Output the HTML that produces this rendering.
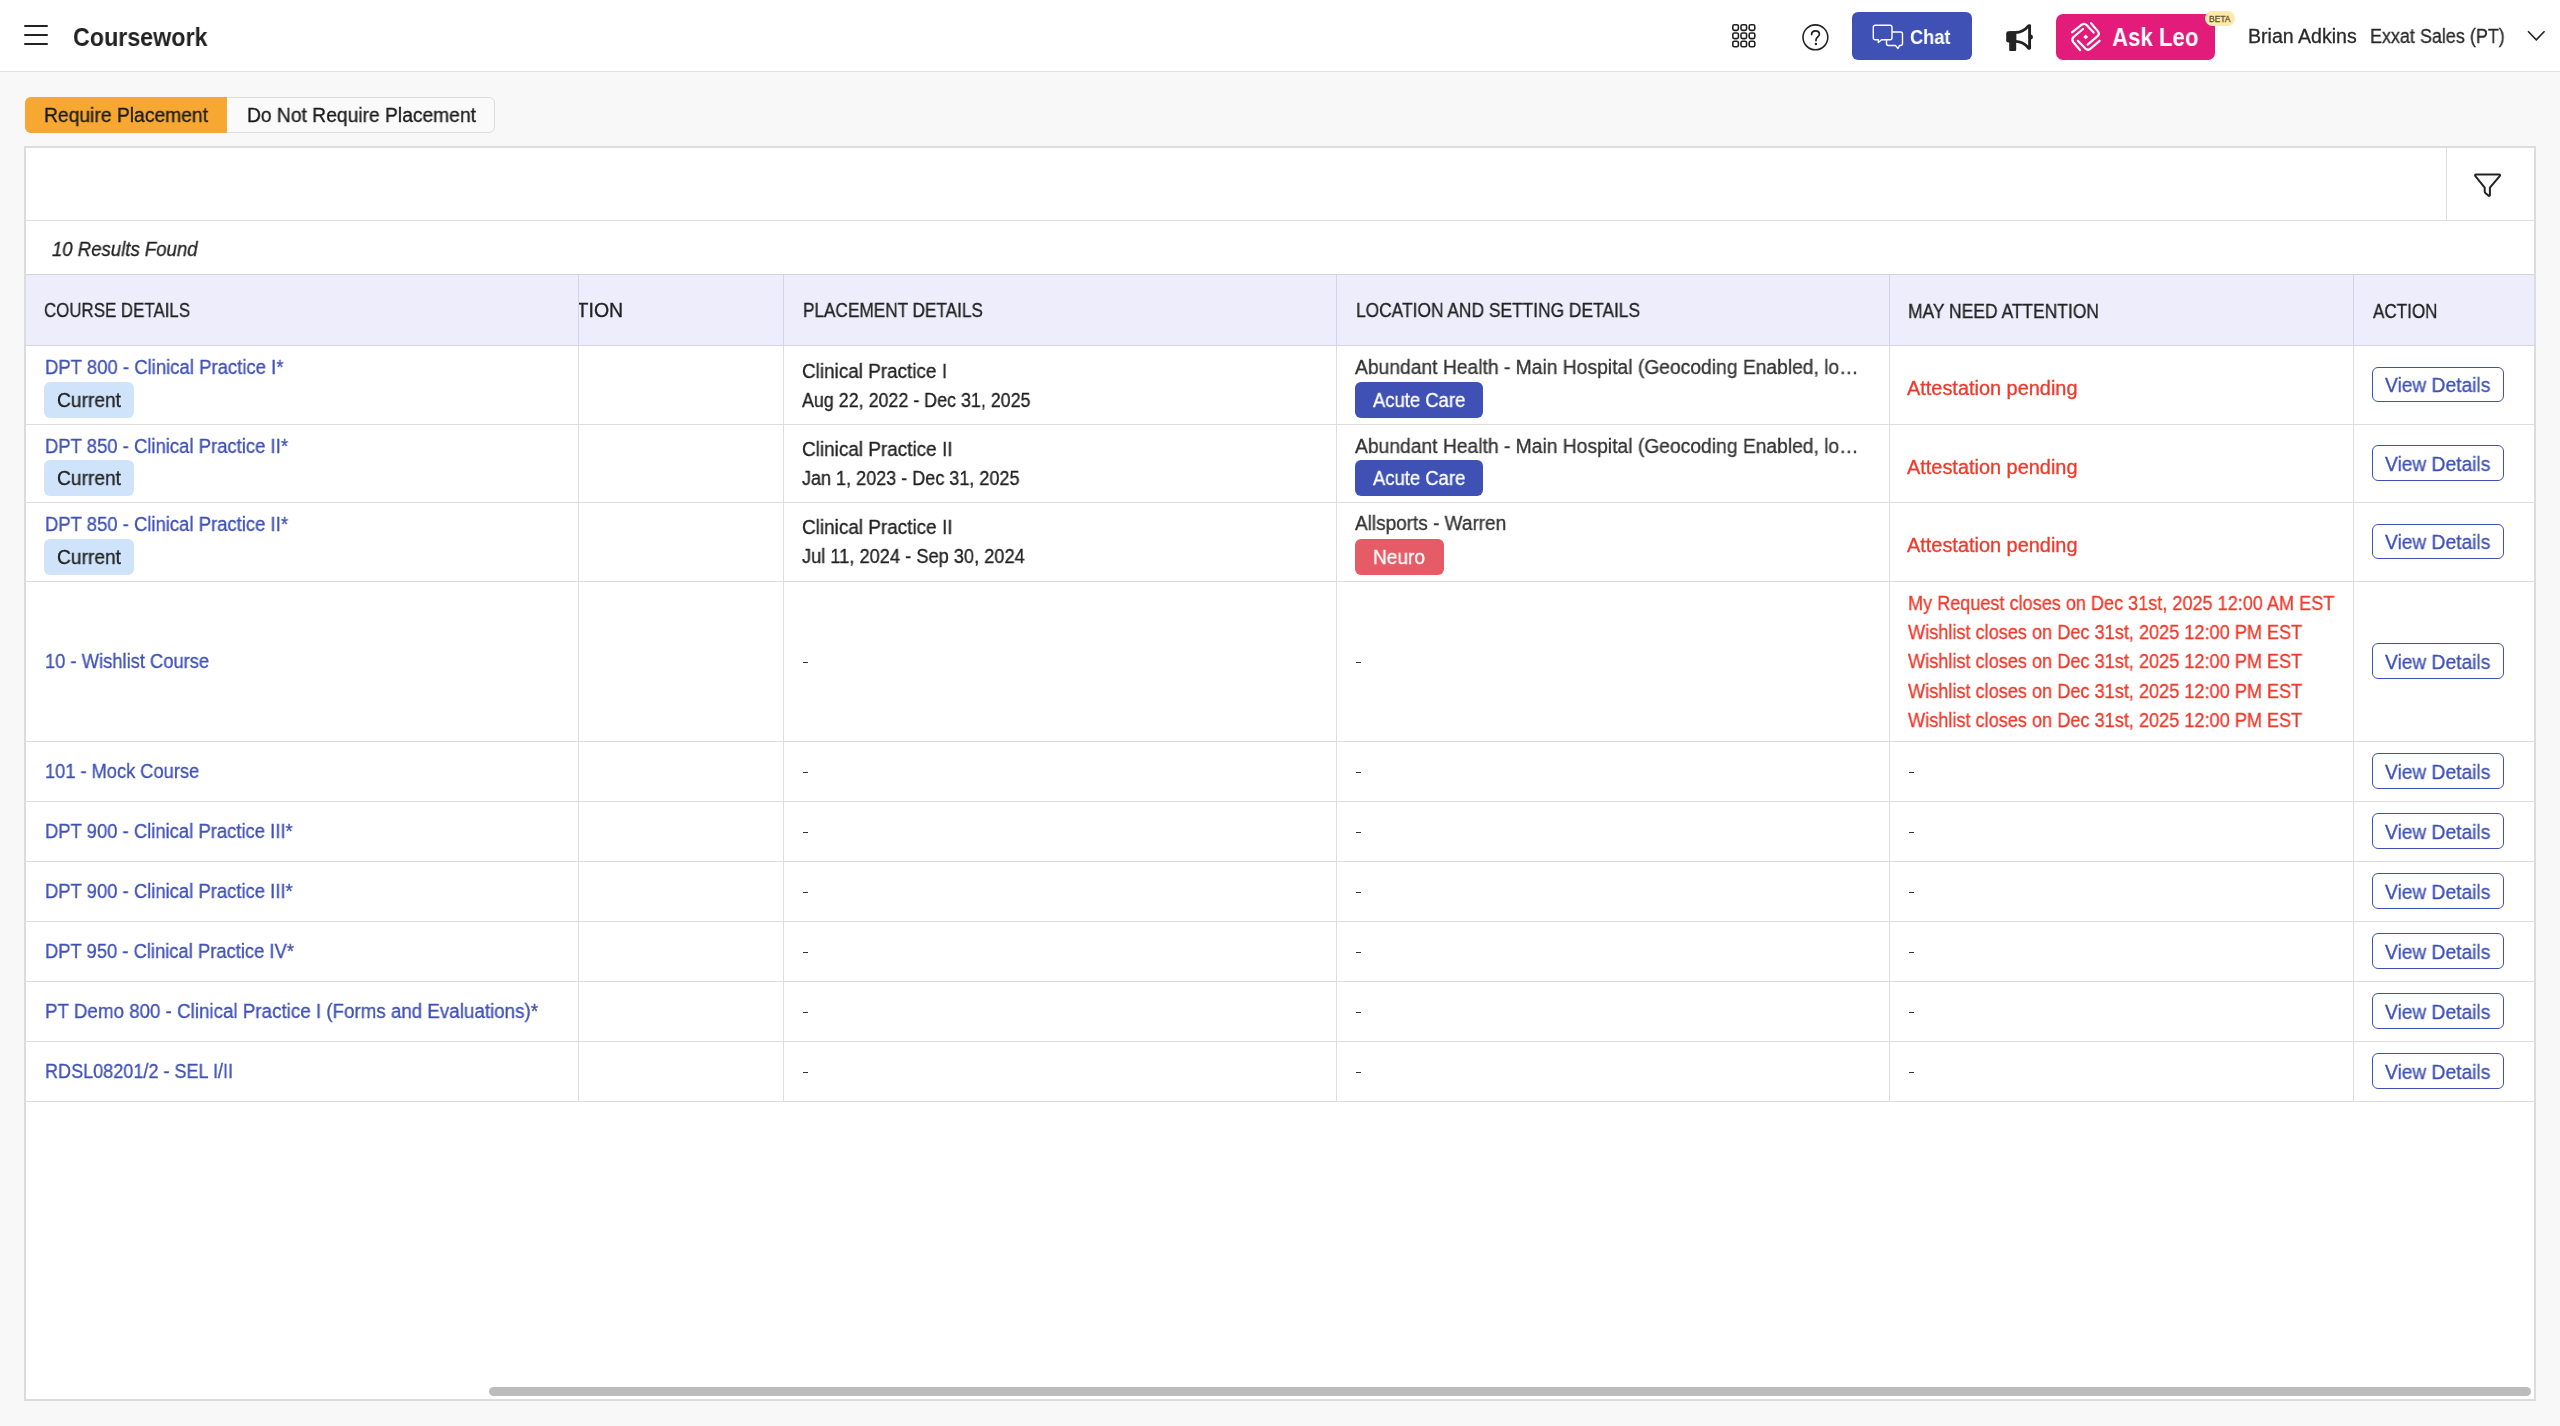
<!DOCTYPE html>
<html><head><meta charset="utf-8"><title>Coursework</title><style>
html,body{margin:0;padding:0;}
body{width:2560px;height:1426px;position:relative;overflow:hidden;background:#f8f8f8;font-family:"Liberation Sans", sans-serif;}
.t{position:absolute;white-space:nowrap;line-height:1;transform-origin:0 0;will-change:transform;}
svg{position:absolute;overflow:visible;}
</style></head>
<body>
<div style="position:absolute;left:0px;top:0px;width:2560px;height:71px;background:#fff;"></div>
<div style="position:absolute;left:0px;top:71px;width:2560px;height:1px;background:#e2e2e2;"></div>
<div style="position:absolute;left:24px;top:25.4px;width:24px;height:2px;background:#222222;border-radius:1px;"></div>
<div style="position:absolute;left:24px;top:34.0px;width:24px;height:2px;background:#222222;border-radius:1px;"></div>
<div style="position:absolute;left:24px;top:42.6px;width:24px;height:2px;background:#222222;border-radius:1px;"></div>
<div class="t" id="t0" style="left:73px;top:24.30px;font-size:26px;color:#222222;font-weight:700;transform:scaleX(0.8951);">Coursework</div>
<svg style="left:1732px;top:24px" width="23" height="23" viewBox="0 0 23 23"><rect x="0.8" y="0.8" width="5.6" height="5.6" rx="1.6" fill="none" stroke="#222222" stroke-width="1.6"/><rect x="9.0" y="0.8" width="5.6" height="5.6" rx="1.6" fill="none" stroke="#222222" stroke-width="1.6"/><rect x="17.2" y="0.8" width="5.6" height="5.6" rx="1.6" fill="none" stroke="#222222" stroke-width="1.6"/><rect x="0.8" y="9.0" width="5.6" height="5.6" rx="1.6" fill="none" stroke="#222222" stroke-width="1.6"/><rect x="9.0" y="9.0" width="5.6" height="5.6" rx="1.6" fill="none" stroke="#222222" stroke-width="1.6"/><rect x="17.2" y="9.0" width="5.6" height="5.6" rx="1.6" fill="none" stroke="#222222" stroke-width="1.6"/><rect x="0.8" y="17.2" width="5.6" height="5.6" rx="1.6" fill="none" stroke="#222222" stroke-width="1.6"/><rect x="9.0" y="17.2" width="5.6" height="5.6" rx="1.6" fill="none" stroke="#222222" stroke-width="1.6"/><rect x="17.2" y="17.2" width="5.6" height="5.6" rx="1.6" fill="none" stroke="#222222" stroke-width="1.6"/></svg>
<svg style="left:1802px;top:23.5px" width="27" height="27" viewBox="0 0 27 27"><circle cx="13.4" cy="13.3" r="12.4" fill="none" stroke="#222222" stroke-width="1.6"/><path d="M9.6 10.6 C9.6 8.2 11.3 6.8 13.5 6.8 C15.8 6.8 17.4 8.2 17.4 10.3 C17.4 12.6 14.2 13.3 14 15.8 L14 16.6" fill="none" stroke="#222222" stroke-width="1.7" stroke-linecap="round"/><circle cx="13.9" cy="20" r="1.2" fill="#222222"/></svg>
<div style="position:absolute;left:1852px;top:12px;width:120px;height:48px;background:#3f51b5;border-radius:6px;"></div>
<svg style="left:1872px;top:24px" width="32" height="26" viewBox="0 0 32 26"><path d="M15 8 L28.5 8 Q30.5 8 30.5 10 L30.5 19.5 Q30.5 21.5 28.5 21.5 L27.5 21.5 L26 24.5 L23.5 21.5 L16.5 21.5 Q14.5 21.5 14.5 19.5 L14.5 16" fill="none" stroke="#fff" stroke-width="1.4" stroke-linejoin="round"/><path d="M3.3 1.3 L18 1.3 Q20 1.3 20 3.3 L20 13.8 Q20 15.8 18 15.8 L9.5 15.8 L6.3 18.5 L6.3 15.8 L3.3 15.8 Q1.3 15.8 1.3 13.8 L1.3 3.3 Q1.3 1.3 3.3 1.3 Z" fill="#3f51b5" stroke="#fff" stroke-width="1.4" stroke-linejoin="round"/></svg>
<div class="t" id="t1" style="left:1910px;top:28.10px;font-size:19.5px;color:#fff;font-weight:700;transform:scaleX(0.9344);">Chat</div>
<svg style="left:1995px;top:15px" width="40" height="40" viewBox="0 0 40 40"><path d="M14.2 16.3 L21.2 16.3 L21.2 35 Q21.2 36 20.2 36 L15.2 36 Q14.2 36 14.2 35 Z" fill="#222222"/><path d="M13.5 16.3 L21.2 16.3 L21.2 27.6 L13.5 27.6 Q11.2 27.6 11.2 25.3 L11.2 18.6 Q11.2 16.3 13.5 16.3 Z" fill="#222222"/><path d="M20.5 17.5 Q28 17.5 33.8 10.6 L34.6 10.6 L34.6 33.2 L33.8 33.2 Q28 26.4 20.5 26.4" fill="none" stroke="#222222" stroke-width="2.9" stroke-linejoin="round"/><path d="M35.4 19.4 A2.5 2.5 0 0 1 35.4 24.4 Z" fill="#222222"/></svg>
<div style="position:absolute;left:2056px;top:14px;width:158.7px;height:46px;background:#e31c7b;border-radius:7px;"></div>
<svg style="left:2070px;top:22px" width="32" height="32" viewBox="0 0 32 32"><g fill="none" stroke="#fff" stroke-width="2.2" stroke-linecap="round" stroke-linejoin="round"><path d="M2 10.3 L11.8 2.6 Q14.4 0.8 16.6 3 L23.6 10.6"/><path d="M21 1.2 L28 9.4 Q30 12 27.6 14.2 L17.6 22.6"/><path d="M13 7 L3.6 15 Q1.2 17.5 3.2 20 L10.2 28.2"/><path d="M7.8 18.8 L15.4 26.6 Q17.8 28.8 20.2 26.8 L29.6 18.8"/></g><rect x="14" y="13.2" width="3.4" height="3.4" fill="#fff" transform="rotate(45 15.7 14.9)"/></svg>
<div class="t" id="t2" style="left:2112px;top:25.30px;font-size:25px;color:#fff;font-weight:700;transform:scaleX(0.8893);">Ask Leo</div>
<div style="position:absolute;left:2205px;top:11px;width:29.5px;height:15px;background:#fdeaa9;border-radius:8px;"></div>
<div class="t" id="t3" style="left:2209.0px;top:14.80px;font-size:8.6px;color:#5a5030;font-weight:400;-webkit-text-stroke-width:0.3px;transform:scaleX(0.9857);">BETA</div>
<div class="t" id="t4" style="left:2248.3px;top:26.80px;font-size:19.5px;color:#2a2a2a;font-weight:400;-webkit-text-stroke-width:0.3px;transform:scaleX(1.0027);">Brian Adkins</div>
<div class="t" id="t5" style="left:2370.4px;top:26.80px;font-size:19.5px;color:#2a2a2a;font-weight:400;-webkit-text-stroke-width:0.3px;transform:scaleX(0.9207);">Exxat Sales (PT)</div>
<svg style="left:2527px;top:30px" width="19" height="12" viewBox="0 0 19 12"><path d="M1 1.2 L9.3 9.8 L17.6 1.2" fill="none" stroke="#222222" stroke-width="1.6"/></svg>
<div style="position:absolute;left:25px;top:96.8px;width:469.5px;height:36.6px;box-sizing:border-box;background:#fafafa;border:1px solid #dcdcdc;border-radius:6px;"></div>
<div style="position:absolute;left:25px;top:97px;width:202px;height:36px;background:#f7a833;border-radius:6px 0 0 6px;"></div>
<div class="t" id="t6" style="left:44.4px;top:106.30px;font-size:19.5px;color:#1a1a1a;font-weight:400;-webkit-text-stroke-width:0.3px;transform:scaleX(0.9889);">Require Placement</div>
<div class="t" id="t7" style="left:247px;top:106.30px;font-size:19.5px;color:#1a1a1a;font-weight:400;-webkit-text-stroke-width:0.3px;transform:scaleX(0.9873);">Do Not Require Placement</div>
<div style="position:absolute;left:24px;top:146px;width:2512px;height:1255px;box-sizing:border-box;background:#fff;border:2px solid #dcdcdc;"></div>
<div style="position:absolute;left:26px;top:220px;width:2508px;height:1px;background:#dedede;"></div>
<div style="position:absolute;left:2446px;top:148px;width:1px;height:72px;background:#dedede;"></div>
<svg style="left:2472px;top:171px" width="31" height="28" viewBox="0 0 31 28"><path d="M4.2 3.4 L26.9 3.4 Q28.8 3.6 27.7 5.1 L17.9 16.6 L17.9 24 Q17.6 25.4 16.4 24.6 L13.6 22.2 Q12.7 21.4 12.7 20.4 L12.7 16.6 L3.4 5.1 Q2.4 3.6 4.2 3.4 Z" fill="none" stroke="#222222" stroke-width="2" stroke-linejoin="round"/></svg>
<div class="t" id="t8" style="left:51.8px;top:239.50px;font-size:19.5px;color:#222;font-weight:400;-webkit-text-stroke-width:0.3px;font-style:italic;transform:scaleX(0.9520);">10 Results Found</div>
<div style="position:absolute;left:26px;top:274px;width:2508px;height:71px;background:#eeedfb;"></div>
<div style="position:absolute;left:26px;top:274px;width:2508px;height:1px;background:#d4d3e6;"></div>
<div style="position:absolute;left:26px;top:345px;width:2508px;height:1px;background:#d4d3e6;"></div>
<div style="position:absolute;left:26px;top:424px;width:2508px;height:1px;background:#dedede;"></div>
<div style="position:absolute;left:26px;top:502px;width:2508px;height:1px;background:#dedede;"></div>
<div style="position:absolute;left:26px;top:581px;width:2508px;height:1px;background:#dedede;"></div>
<div style="position:absolute;left:26px;top:741px;width:2508px;height:1px;background:#dedede;"></div>
<div style="position:absolute;left:26px;top:801px;width:2508px;height:1px;background:#dedede;"></div>
<div style="position:absolute;left:26px;top:861px;width:2508px;height:1px;background:#dedede;"></div>
<div style="position:absolute;left:26px;top:921px;width:2508px;height:1px;background:#dedede;"></div>
<div style="position:absolute;left:26px;top:981px;width:2508px;height:1px;background:#dedede;"></div>
<div style="position:absolute;left:26px;top:1041px;width:2508px;height:1px;background:#dedede;"></div>
<div style="position:absolute;left:26px;top:1101px;width:2508px;height:1px;background:#dedede;"></div>
<div style="position:absolute;left:578px;top:275px;width:1px;height:70px;background:#d4d3e6;"></div>
<div style="position:absolute;left:578px;top:346px;width:1px;height:755px;background:#dedede;"></div>
<div style="position:absolute;left:783px;top:275px;width:1px;height:70px;background:#d4d3e6;"></div>
<div style="position:absolute;left:783px;top:346px;width:1px;height:755px;background:#dedede;"></div>
<div style="position:absolute;left:1336px;top:275px;width:1px;height:70px;background:#d4d3e6;"></div>
<div style="position:absolute;left:1336px;top:346px;width:1px;height:755px;background:#dedede;"></div>
<div style="position:absolute;left:1889px;top:275px;width:1px;height:70px;background:#d4d3e6;"></div>
<div style="position:absolute;left:1889px;top:346px;width:1px;height:755px;background:#dedede;"></div>
<div style="position:absolute;left:2353px;top:275px;width:1px;height:70px;background:#d4d3e6;"></div>
<div style="position:absolute;left:2353px;top:346px;width:1px;height:755px;background:#dedede;"></div>
<div class="t" id="t9" style="left:565.3px;top:300.90px;font-size:19.5px;color:#222222;font-weight:400;-webkit-text-stroke-width:0.3px;">ATION</div>
<div style="position:absolute;left:26px;top:275px;width:552px;height:70px;background:#eeedfb;"></div>
<div style="position:absolute;left:578px;top:275px;width:1px;height:70px;background:#d4d3e6;"></div>
<div class="t" id="t10" style="left:44.2px;top:300.90px;font-size:19.5px;color:#222222;font-weight:400;-webkit-text-stroke-width:0.3px;transform:scaleX(0.8655);">COURSE DETAILS</div>
<div class="t" id="t11" style="left:802.9px;top:300.90px;font-size:19.5px;color:#222222;font-weight:400;-webkit-text-stroke-width:0.3px;transform:scaleX(0.8819);">PLACEMENT DETAILS</div>
<div class="t" id="t12" style="left:1355.7px;top:300.90px;font-size:19.5px;color:#222222;font-weight:400;-webkit-text-stroke-width:0.3px;transform:scaleX(0.8905);">LOCATION AND SETTING DETAILS</div>
<div class="t" id="t13" style="left:1907.6px;top:301.60px;font-size:19.5px;color:#222222;font-weight:400;-webkit-text-stroke-width:0.3px;transform:scaleX(0.8948);">MAY NEED ATTENTION</div>
<div class="t" id="t14" style="left:2372.7px;top:301.60px;font-size:19.5px;color:#222222;font-weight:400;-webkit-text-stroke-width:0.3px;transform:scaleX(0.8755);">ACTION</div>
<div class="t" id="t15" style="left:44.7px;top:358.40px;font-size:19.5px;color:#3f51b5;font-weight:400;-webkit-text-stroke-width:0.3px;transform:scaleX(0.9500);">DPT 800 - Clinical Practice I*</div>
<div style="position:absolute;left:44.3px;top:382px;width:89.5px;height:35.7px;background:#cfe3fb;border-radius:6px;"></div>
<div class="t" id="t16" style="left:57px;top:390.50px;font-size:19.5px;color:#222;font-weight:400;-webkit-text-stroke-width:0.3px;transform:scaleX(0.9841);">Current</div>
<div class="t" id="t17" style="left:44.7px;top:436.50px;font-size:19.5px;color:#3f51b5;font-weight:400;-webkit-text-stroke-width:0.3px;transform:scaleX(0.9474);">DPT 850 - Clinical Practice II*</div>
<div style="position:absolute;left:44.3px;top:460.3px;width:89.5px;height:35.7px;background:#cfe3fb;border-radius:6px;"></div>
<div class="t" id="t18" style="left:57px;top:468.80px;font-size:19.5px;color:#222;font-weight:400;-webkit-text-stroke-width:0.3px;transform:scaleX(0.9841);">Current</div>
<div class="t" id="t19" style="left:44.7px;top:514.60px;font-size:19.5px;color:#3f51b5;font-weight:400;-webkit-text-stroke-width:0.3px;transform:scaleX(0.9474);">DPT 850 - Clinical Practice II*</div>
<div style="position:absolute;left:44.3px;top:539px;width:89.5px;height:35.7px;background:#cfe3fb;border-radius:6px;"></div>
<div class="t" id="t20" style="left:57px;top:547.50px;font-size:19.5px;color:#222;font-weight:400;-webkit-text-stroke-width:0.3px;transform:scaleX(0.9841);">Current</div>
<div class="t" id="t21" style="left:802.3px;top:361.50px;font-size:19.5px;color:#222;font-weight:400;-webkit-text-stroke-width:0.3px;transform:scaleX(0.9696);">Clinical Practice I</div>
<div class="t" id="t22" style="left:802.3px;top:390.80px;font-size:19.5px;color:#222;font-weight:400;-webkit-text-stroke-width:0.3px;transform:scaleX(0.9163);">Aug 22, 2022 - Dec 31, 2025</div>
<div class="t" id="t23" style="left:802.3px;top:439.80px;font-size:19.5px;color:#222;font-weight:400;-webkit-text-stroke-width:0.3px;transform:scaleX(0.9712);">Clinical Practice II</div>
<div class="t" id="t24" style="left:802.3px;top:468.70px;font-size:19.5px;color:#222;font-weight:400;-webkit-text-stroke-width:0.3px;transform:scaleX(0.9245);">Jan 1, 2023 - Dec 31, 2025</div>
<div class="t" id="t25" style="left:802.3px;top:517.70px;font-size:19.5px;color:#222;font-weight:400;-webkit-text-stroke-width:0.3px;transform:scaleX(0.9712);">Clinical Practice II</div>
<div class="t" id="t26" style="left:802.3px;top:547.40px;font-size:19.5px;color:#222;font-weight:400;-webkit-text-stroke-width:0.3px;transform:scaleX(0.9355);">Jul 11, 2024 - Sep 30, 2024</div>
<div class="t" id="t27" style="left:1354.8px;top:358.00px;font-size:19.5px;color:#333;font-weight:400;-webkit-text-stroke-width:0.3px;transform:scaleX(0.9883);">Abundant Health - Main Hospital (Geocoding Enabled, lo…</div>
<div style="position:absolute;left:1354.8px;top:382.4px;width:128px;height:35.6px;background:#3f51b5;border-radius:6px;"></div>
<div class="t" id="t28" style="left:1373px;top:390.90px;font-size:19.5px;color:#fff;font-weight:400;-webkit-text-stroke-width:0.3px;transform:scaleX(0.9461);">Acute Care</div>
<div class="t" id="t29" style="left:1354.8px;top:436.70px;font-size:19.5px;color:#333;font-weight:400;-webkit-text-stroke-width:0.3px;transform:scaleX(0.9883);">Abundant Health - Main Hospital (Geocoding Enabled, lo…</div>
<div style="position:absolute;left:1354.8px;top:460.3px;width:128px;height:35.6px;background:#3f51b5;border-radius:6px;"></div>
<div class="t" id="t30" style="left:1373px;top:468.80px;font-size:19.5px;color:#fff;font-weight:400;-webkit-text-stroke-width:0.3px;transform:scaleX(0.9461);">Acute Care</div>
<div class="t" id="t31" style="left:1354.8px;top:514.20px;font-size:19.5px;color:#333;font-weight:400;-webkit-text-stroke-width:0.3px;transform:scaleX(0.9735);">Allsports - Warren</div>
<div style="position:absolute;left:1354.8px;top:539px;width:89px;height:35.6px;background:#e55c66;border-radius:6px;"></div>
<div class="t" id="t32" style="left:1373px;top:547.50px;font-size:19.5px;color:#fff;font-weight:400;-webkit-text-stroke-width:0.3px;transform:scaleX(0.9788);">Neuro</div>
<div class="t" id="t33" style="left:1907.3px;top:378.80px;font-size:19.5px;color:#f0392b;font-weight:400;-webkit-text-stroke-width:0.3px;transform:scaleX(1.0211);">Attestation pending</div>
<div class="t" id="t34" style="left:1907.3px;top:458.00px;font-size:19.5px;color:#f0392b;font-weight:400;-webkit-text-stroke-width:0.3px;transform:scaleX(1.0211);">Attestation pending</div>
<div class="t" id="t35" style="left:1907.3px;top:535.50px;font-size:19.5px;color:#f0392b;font-weight:400;-webkit-text-stroke-width:0.3px;transform:scaleX(1.0211);">Attestation pending</div>
<div class="t" id="t36" style="left:45.2px;top:652.00px;font-size:19.5px;color:#3f51b5;font-weight:400;-webkit-text-stroke-width:0.3px;transform:scaleX(0.9411);">10 - Wishlist Course</div>
<div style="position:absolute;left:802.5px;top:661.7px;width:5.5px;height:1.6px;background:#333;"></div>
<div style="position:absolute;left:1355.5px;top:661.7px;width:5.5px;height:1.6px;background:#333;"></div>
<div class="t" id="t37" style="left:1908.3px;top:593.60px;font-size:19.5px;color:#f0392b;font-weight:400;-webkit-text-stroke-width:0.3px;transform:scaleX(0.9274);">My Request closes on Dec 31st, 2025 12:00 AM EST</div>
<div class="t" id="t38" style="left:1908.3px;top:622.70px;font-size:19.5px;color:#f0392b;font-weight:400;-webkit-text-stroke-width:0.3px;transform:scaleX(0.9304);">Wishlist closes on Dec 31st, 2025 12:00 PM EST</div>
<div class="t" id="t39" style="left:1908.3px;top:651.75px;font-size:19.5px;color:#f0392b;font-weight:400;-webkit-text-stroke-width:0.3px;transform:scaleX(0.9304);">Wishlist closes on Dec 31st, 2025 12:00 PM EST</div>
<div class="t" id="t40" style="left:1908.3px;top:681.60px;font-size:19.5px;color:#f0392b;font-weight:400;-webkit-text-stroke-width:0.3px;transform:scaleX(0.9304);">Wishlist closes on Dec 31st, 2025 12:00 PM EST</div>
<div class="t" id="t41" style="left:1908.3px;top:710.60px;font-size:19.5px;color:#f0392b;font-weight:400;-webkit-text-stroke-width:0.3px;transform:scaleX(0.9304);">Wishlist closes on Dec 31st, 2025 12:00 PM EST</div>
<div class="t" id="t42" style="left:45.2px;top:762.30px;font-size:19.5px;color:#3f51b5;font-weight:400;-webkit-text-stroke-width:0.3px;transform:scaleX(0.9354);">101 - Mock Course</div>
<div style="position:absolute;left:802.5px;top:771.7px;width:5.5px;height:1.6px;background:#333;"></div>
<div style="position:absolute;left:1355.5px;top:771.7px;width:5.5px;height:1.6px;background:#333;"></div>
<div style="position:absolute;left:1908.5px;top:771.7px;width:5.5px;height:1.6px;background:#333;"></div>
<div class="t" id="t43" style="left:45.2px;top:822.30px;font-size:19.5px;color:#3f51b5;font-weight:400;-webkit-text-stroke-width:0.3px;transform:scaleX(0.9458);">DPT 900 - Clinical Practice III*</div>
<div style="position:absolute;left:802.5px;top:831.7px;width:5.5px;height:1.6px;background:#333;"></div>
<div style="position:absolute;left:1355.5px;top:831.7px;width:5.5px;height:1.6px;background:#333;"></div>
<div style="position:absolute;left:1908.5px;top:831.7px;width:5.5px;height:1.6px;background:#333;"></div>
<div class="t" id="t44" style="left:45.2px;top:882.30px;font-size:19.5px;color:#3f51b5;font-weight:400;-webkit-text-stroke-width:0.3px;transform:scaleX(0.9458);">DPT 900 - Clinical Practice III*</div>
<div style="position:absolute;left:802.5px;top:891.7px;width:5.5px;height:1.6px;background:#333;"></div>
<div style="position:absolute;left:1355.5px;top:891.7px;width:5.5px;height:1.6px;background:#333;"></div>
<div style="position:absolute;left:1908.5px;top:891.7px;width:5.5px;height:1.6px;background:#333;"></div>
<div class="t" id="t45" style="left:45.2px;top:942.30px;font-size:19.5px;color:#3f51b5;font-weight:400;-webkit-text-stroke-width:0.3px;transform:scaleX(0.9429);">DPT 950 - Clinical Practice IV*</div>
<div style="position:absolute;left:802.5px;top:951.7px;width:5.5px;height:1.6px;background:#333;"></div>
<div style="position:absolute;left:1355.5px;top:951.7px;width:5.5px;height:1.6px;background:#333;"></div>
<div style="position:absolute;left:1908.5px;top:951.7px;width:5.5px;height:1.6px;background:#333;"></div>
<div class="t" id="t46" style="left:45.2px;top:1002.30px;font-size:19.5px;color:#3f51b5;font-weight:400;-webkit-text-stroke-width:0.3px;transform:scaleX(0.9624);">PT Demo 800 - Clinical Practice I (Forms and Evaluations)*</div>
<div style="position:absolute;left:802.5px;top:1011.7px;width:5.5px;height:1.6px;background:#333;"></div>
<div style="position:absolute;left:1355.5px;top:1011.7px;width:5.5px;height:1.6px;background:#333;"></div>
<div style="position:absolute;left:1908.5px;top:1011.7px;width:5.5px;height:1.6px;background:#333;"></div>
<div class="t" id="t47" style="left:45.2px;top:1062.30px;font-size:19.5px;color:#3f51b5;font-weight:400;-webkit-text-stroke-width:0.3px;transform:scaleX(0.9258);">RDSL08201/2 - SEL I/II</div>
<div style="position:absolute;left:802.5px;top:1071.7px;width:5.5px;height:1.6px;background:#333;"></div>
<div style="position:absolute;left:1355.5px;top:1071.7px;width:5.5px;height:1.6px;background:#333;"></div>
<div style="position:absolute;left:1908.5px;top:1071.7px;width:5.5px;height:1.6px;background:#333;"></div>
<div style="position:absolute;left:2372px;top:366.8px;width:132px;height:35.4px;box-sizing:border-box;border:1.5px solid #3f51b5;border-radius:6px;background:#fff;"></div>
<div class="t" id="t48" style="left:2385px;top:376.00px;font-size:19.5px;color:#3f51b5;font-weight:400;-webkit-text-stroke-width:0.3px;transform:scaleX(0.9847);">View Details</div>
<div style="position:absolute;left:2372px;top:445.3px;width:132px;height:35.4px;box-sizing:border-box;border:1.5px solid #3f51b5;border-radius:6px;background:#fff;"></div>
<div class="t" id="t49" style="left:2385px;top:454.50px;font-size:19.5px;color:#3f51b5;font-weight:400;-webkit-text-stroke-width:0.3px;transform:scaleX(0.9847);">View Details</div>
<div style="position:absolute;left:2372px;top:523.8px;width:132px;height:35.4px;box-sizing:border-box;border:1.5px solid #3f51b5;border-radius:6px;background:#fff;"></div>
<div class="t" id="t50" style="left:2385px;top:533.00px;font-size:19.5px;color:#3f51b5;font-weight:400;-webkit-text-stroke-width:0.3px;transform:scaleX(0.9847);">View Details</div>
<div style="position:absolute;left:2372px;top:643.3px;width:132px;height:35.4px;box-sizing:border-box;border:1.5px solid #3f51b5;border-radius:6px;background:#fff;"></div>
<div class="t" id="t51" style="left:2385px;top:652.50px;font-size:19.5px;color:#3f51b5;font-weight:400;-webkit-text-stroke-width:0.3px;transform:scaleX(0.9847);">View Details</div>
<div style="position:absolute;left:2372px;top:753.3px;width:132px;height:35.4px;box-sizing:border-box;border:1.5px solid #3f51b5;border-radius:6px;background:#fff;"></div>
<div class="t" id="t52" style="left:2385px;top:762.50px;font-size:19.5px;color:#3f51b5;font-weight:400;-webkit-text-stroke-width:0.3px;transform:scaleX(0.9847);">View Details</div>
<div style="position:absolute;left:2372px;top:813.3px;width:132px;height:35.4px;box-sizing:border-box;border:1.5px solid #3f51b5;border-radius:6px;background:#fff;"></div>
<div class="t" id="t53" style="left:2385px;top:822.50px;font-size:19.5px;color:#3f51b5;font-weight:400;-webkit-text-stroke-width:0.3px;transform:scaleX(0.9847);">View Details</div>
<div style="position:absolute;left:2372px;top:873.3px;width:132px;height:35.4px;box-sizing:border-box;border:1.5px solid #3f51b5;border-radius:6px;background:#fff;"></div>
<div class="t" id="t54" style="left:2385px;top:882.50px;font-size:19.5px;color:#3f51b5;font-weight:400;-webkit-text-stroke-width:0.3px;transform:scaleX(0.9847);">View Details</div>
<div style="position:absolute;left:2372px;top:933.3px;width:132px;height:35.4px;box-sizing:border-box;border:1.5px solid #3f51b5;border-radius:6px;background:#fff;"></div>
<div class="t" id="t55" style="left:2385px;top:942.50px;font-size:19.5px;color:#3f51b5;font-weight:400;-webkit-text-stroke-width:0.3px;transform:scaleX(0.9847);">View Details</div>
<div style="position:absolute;left:2372px;top:993.3px;width:132px;height:35.4px;box-sizing:border-box;border:1.5px solid #3f51b5;border-radius:6px;background:#fff;"></div>
<div class="t" id="t56" style="left:2385px;top:1002.50px;font-size:19.5px;color:#3f51b5;font-weight:400;-webkit-text-stroke-width:0.3px;transform:scaleX(0.9847);">View Details</div>
<div style="position:absolute;left:2372px;top:1053.3px;width:132px;height:35.4px;box-sizing:border-box;border:1.5px solid #3f51b5;border-radius:6px;background:#fff;"></div>
<div class="t" id="t57" style="left:2385px;top:1062.50px;font-size:19.5px;color:#3f51b5;font-weight:400;-webkit-text-stroke-width:0.3px;transform:scaleX(0.9847);">View Details</div>
<div style="position:absolute;left:489px;top:1387px;width:2042px;height:9px;background:#bcbcbc;border-radius:5px;"></div>
</body></html>
